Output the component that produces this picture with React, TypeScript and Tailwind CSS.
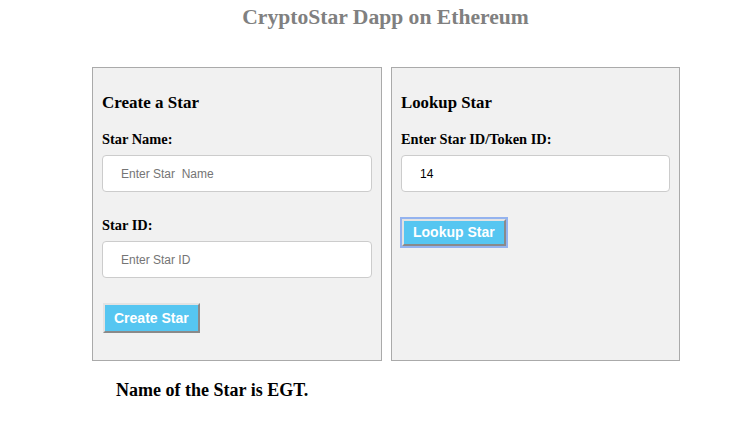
import React from 'react';

const serif = { fontFamily: '"Liberation Serif", "Times New Roman", serif' };

const Field: React.FC<{ label: string; placeholder?: string; value?: string; labelTop: string; width: string }> = ({
  label,
  placeholder,
  value,
  labelTop,
  width,
}) => (
  <>
    <label className={`block text-[14.4px] leading-[18px] font-bold text-black ${labelTop}`}>{label}</label>
    <input
      readOnly
      value={value}
      placeholder={placeholder}
      className={`${width} mt-[7px] block h-[37px] pl-[18px] bg-white border border-[#ccc] rounded-[4px] text-[12px] text-black placeholder:text-[#757575] outline-none font-['Liberation_Sans',Arial,sans-serif]`}
    />
  </>
);

const StarButton: React.FC<{ children: React.ReactNode; focused?: boolean; className: string }> = ({
  children,
  focused,
  className,
}) => (
  <button
    className={`${className} block bg-[#56c6f1] text-white text-[14px] font-bold border-2 border-t-[#e3e3e3] border-l-[#e3e3e3] border-r-[#8a8a8a] border-b-[#8a8a8a] font-['Liberation_Sans',Arial,sans-serif] ${
      focused ? 'outline-2 outline-[#94b3ef] outline-offset-0' : ''
    }`}
  >
    {children}
  </button>
);

export default function App() {
  return (
    <div className="w-[749px] h-[428px] bg-white text-black" style={serif}>
      <h1 className="pt-[4px] pl-[22px] text-center text-[21.6px] leading-[26px] font-bold text-[#808080]">
        CryptoStar Dapp on Ethereum
      </h1>

      <div className="mt-[37px] ml-[92px] flex gap-[9px]">
        {/* create panel */}
        <div className="w-[290px] h-[294px] border border-[#aaa] bg-[#f1f1f1] px-[9px]">
          <h3 className="mt-[25px] text-[17px] leading-[20px] font-bold">Create a Star</h3>
          <Field label="Star Name:" placeholder={'Enter Star\u00a0 Name'} labelTop="mt-[17px]" width="w-[270px]" />
          <Field label="Star ID:" placeholder="Enter Star ID" labelTop="mt-[24px]" width="w-[270px]" />
          <StarButton className="mt-[25px] ml-[1px] h-[30px] px-[9px]">Create Star</StarButton>
        </div>

        {/* lookup panel */}
        <div className="w-[289px] h-[294px] border border-[#aaa] bg-[#f1f1f1] px-[9px]">
          <h3 className="mt-[25px] text-[16.8px] leading-[20px] font-bold">Lookup Star</h3>
          <Field label="Enter Star ID/Token ID:" value="14" labelTop="mt-[17px]" width="w-[269px]" />
          <StarButton className="mt-[27px] ml-[1px] h-[27px] px-[9px]" focused>
            Lookup Star
          </StarButton>
        </div>
      </div>

      <p className="mt-[19px] ml-[116px] text-[18px] leading-[20px] font-bold">Name of the Star is EGT.</p>
    </div>
  );
}
